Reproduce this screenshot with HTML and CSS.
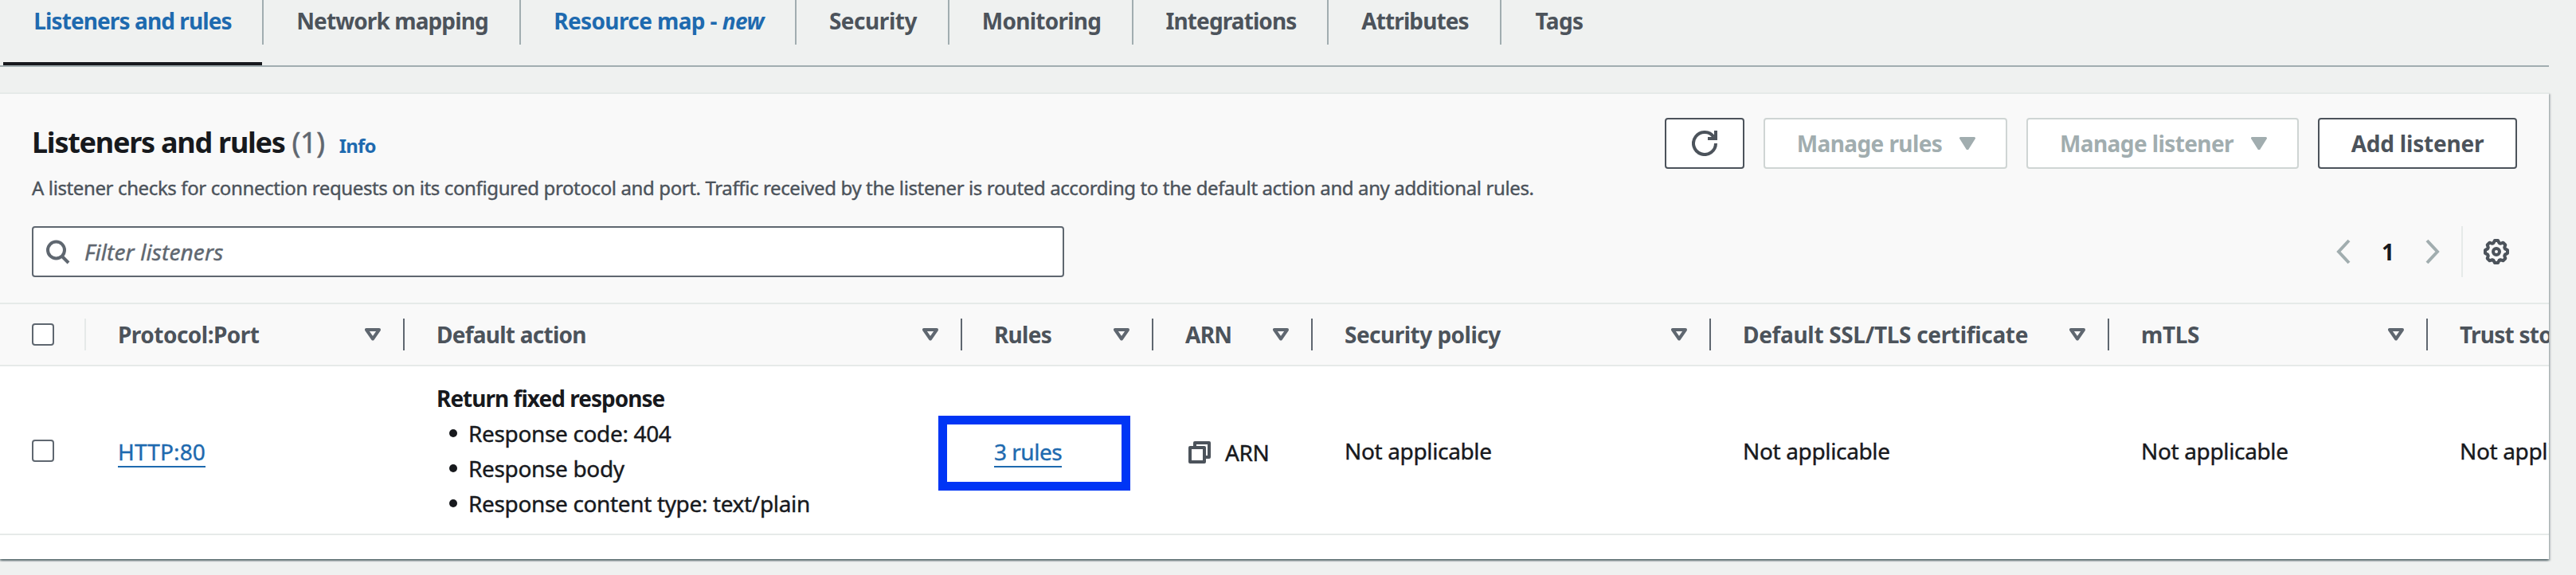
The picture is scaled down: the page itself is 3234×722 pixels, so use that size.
FILE: index.html
```
<!DOCTYPE html>
<html lang="en">
<head>
<meta charset="utf-8">
<title>Listeners and rules</title>
<link rel="stylesheet" href="styles.css">
</head>
<body>
<svg class="defs" width="0" height="0" aria-hidden="true">
  <symbol id="sort" viewBox="0 0 20 16"><path d="M2 2H18L10 13.5Z" fill="none" stroke="currentColor" stroke-width="4" stroke-linejoin="round"/></symbol>
  <symbol id="caret" viewBox="0 0 20 16"><path d="M1.5 1.5H18.5L10 15Z" fill="currentColor" stroke="currentColor" stroke-width="3" stroke-linejoin="round"/></symbol>
</svg>

<nav class="tabs">
  <a class="tab tab-active">Listeners and rules</a>
  <a class="tab">Network mapping</a>
  <a class="tab tab-new">Resource map -&nbsp;<em>new</em></a>
  <a class="tab tab-security">Security</a>
  <a class="tab tab-monitoring">Monitoring</a>
  <a class="tab">Integrations</a>
  <a class="tab">Attributes</a>
  <a class="tab tab-tags">Tags</a>
</nav>

<section class="panel">
  <header class="panel-header">
    <div class="title-row">
      <div class="title-block">
        <div class="title-line">
          <h2 class="title">Listeners and rules</h2>
          <span class="count">(1)</span>
          <a class="info">Info</a>
        </div>
        <p class="description">A listener checks for connection requests on its configured protocol and port. Traffic received by the listener is routed according to the default action and any additional rules.</p>
      </div>
      <div class="actions">
        <button class="btn btn-refresh" aria-label="Refresh">
          <svg width="32" height="32" viewBox="0 0 32 32" fill="none" stroke="currentColor" stroke-width="4"><path d="M30 16A14 14 0 1 1 27.5 8"/><path d="M30 0V10H20"/></svg>
        </button>
        <button class="btn btn-disabled btn-rules">Manage rules<svg class="caret" width="20" height="16"><use href="#caret"/></svg></button>
        <button class="btn btn-disabled btn-listener">Manage listener<svg class="caret" width="20" height="16"><use href="#caret"/></svg></button>
        <button class="btn btn-add">Add listener</button>
      </div>
    </div>
    <div class="tools">
      <div class="search">
        <svg width="32" height="32" viewBox="0 0 32 32" fill="none" stroke="currentColor" stroke-width="4"><circle cx="14.5" cy="14" r="10.5"/><path d="M21.5 21.5L30 30"/></svg>
        <span class="placeholder">Filter listeners</span>
      </div>
      <div class="pager">
        <svg class="chev" width="18" height="32" viewBox="0 0 18 32"><path d="M16 2L3 16L16 30"/></svg>
        <span class="page">1</span>
        <svg class="chev" width="18" height="32" viewBox="0 0 18 32"><path d="M2 2L15 16L2 30"/></svg>
        <span class="rule"></span>
        <svg class="gear" width="32" height="32" viewBox="-16 -16 32 32" fill="none" stroke="currentColor" stroke-width="4" stroke-linejoin="round"><path d="M14-2V2L10.9 3.6L10.2 5.2L11.3 8.5L8.5 11.3L5.2 10.2L3.6 10.9L2 14H-2L-3.6 10.9L-5.2 10.2L-8.5 11.3L-11.3 8.5L-10.2 5.2L-10.9 3.6L-14 2V-2L-10.9-3.6L-10.2-5.2L-11.3-8.5L-8.5-11.3L-5.2-10.2L-3.6-10.9L-2-14H2L3.6-10.9L5.2-10.2L8.5-11.3L11.3-8.5L10.2-5.2L10.9-3.6Z"/><circle r="4"/></svg>
      </div>
    </div>
  </header>

  <div class="table">
    <div class="row head">
      <div class="th th-check"><span class="checkbox"></span></div>
      <div class="th th-proto">Protocol:Port<svg class="sort" width="20" height="16"><use href="#sort"/></svg></div>
      <div class="th">Default action<svg class="sort" width="20" height="16"><use href="#sort"/></svg></div>
      <div class="th">Rules<svg class="sort" width="20" height="16"><use href="#sort"/></svg></div>
      <div class="th">ARN<svg class="sort" width="20" height="16"><use href="#sort"/></svg></div>
      <div class="th th-policy">Security policy<svg class="sort" width="20" height="16"><use href="#sort"/></svg></div>
      <div class="th th-cert">Default SSL/TLS certificate<svg class="sort" width="20" height="16"><use href="#sort"/></svg></div>
      <div class="th th-cert">mTLS<svg class="sort" width="20" height="16"><use href="#sort"/></svg></div>
      <div class="th">Trust store</div>
    </div>
    <div class="row body">
      <div class="td"><span class="checkbox"></span></div>
      <div class="td"><a class="link link-port">HTTP:80</a></div>
      <div class="td td-action">
        <strong class="action">Return fixed response</strong>
        <ul class="details">
          <li>Response code: 404</li>
          <li>Response body</li>
          <li>Response content type: text/plain</li>
        </ul>
      </div>
      <div class="td td-rules"><a class="link link-rules">3 rules</a><span class="highlight"></span></div>
      <div class="td td-arn">
        <svg class="copy" width="28" height="28" viewBox="0 0 28 28" fill="none" stroke="currentColor" stroke-width="4" stroke-linejoin="round"><path d="M2 8H20V26H2Z"/><path d="M8 8V2H26V20H20"/></svg>
        <span>ARN</span>
      </div>
      <div class="td">Not applicable</div>
      <div class="td">Not applicable</div>
      <div class="td">Not applicable</div>
      <div class="td">Not applicable</div>
    </div>
  </div>
</section>
</body>
</html>
```
FILE: styles.css
```
* { box-sizing: border-box; }

body {
  margin: 0;
  height: 722px;
  overflow: hidden;
  background: #eff1f0;
  color: #17191d;
  font: 400 28px/44px "Noto Sans", sans-serif;
  letter-spacing: -0.35px;
  white-space: nowrap;
}

.defs { display: none; }
svg { flex: none; display: block; }

/* Tabs */
.tabs {
  display: grid;
  grid-template-columns: 327px 323px 346px 192px 231px 245px 217px 145px;
  width: 3200px;
  height: 84px;
  padding-left: 4px;
  border-bottom: 2px solid #a1adb0;
}
.tab {
  display: flex;
  justify-content: center;
  height: 56px;
  padding: 4px 0 0 2px;
  border-right: 2px solid #a1adb0;
  color: #4c535b;
  font-weight: 700;
  letter-spacing: -0.9px;
}
.tab:last-child { border-right: 0; padding-left: 0; }
.tab-active { position: relative; padding-left: 0; color: #1e6aaf; }
.tab-active::after {
  content: "";
  position: absolute;
  left: 0;
  right: 0;
  top: 78px;
  height: 4px;
  background: #17191d;
}
.tab-new { color: #1e6aaf; letter-spacing: -0.6px; }
.tab-security { letter-spacing: -0.45px; }
.tab-monitoring { letter-spacing: -0.75px; }
.tab-tags { letter-spacing: -0.6px; }

/* Panel */
.panel {
  width: 3200px;
  height: 586px;
  margin-top: 32px;
  border-top: 2px solid #e6eae9;
  background: #fff;
  box-shadow: 0 2px 2px rgba(0, 28, 36, 0.4), 2px 2px 2px rgba(0, 28, 36, 0.2), -2px 2px 2px rgba(0, 28, 36, 0.2);
}
.panel-header {
  height: 262px;
  padding: 30px 40px 0;
  background: #f9f9f9;
}
.title-row {
  display: flex;
  justify-content: space-between;
  height: 136px;
}
.title-line {
  display: flex;
  align-items: baseline;
  height: 44px;
  margin-top: 9px;
}
.title {
  margin: 0;
  font-size: 36px;
  font-weight: 700;
  line-height: 44px;
  letter-spacing: -1.25px;
}
.count { margin-left: 9px; color: #5f6770; font-size: 36px; -webkit-text-stroke: 0.5px; }
.info {
  margin-left: 18px;
  color: #1e6aaf;
  font-size: 24px;
  font-weight: 700;
  letter-spacing: -0.8px;
}
.description {
  margin: 15px 0 0;
  color: #4c535b;
  font-size: 24px;
  line-height: 40px;
  letter-spacing: -0.38px;
  -webkit-text-stroke: 0.4px;
}
.actions { display: flex; gap: 24px; }
.btn {
  display: flex;
  align-items: center;
  justify-content: center;
  height: 64px;
  padding: 0;
  border: 2px solid #4c535b;
  border-radius: 4px;
  background: #fff;
  color: #4c535b;
  font: 700 28px/44px "Noto Sans", sans-serif;
  letter-spacing: -0.6px;
}
.btn-refresh { width: 100px; }
.btn-disabled { padding-left: 2px; border-color: #cfd5d4; color: #a1adaf; }
.btn-rules { width: 306px; }
.btn-listener { width: 342px; }
.btn-add { width: 250px; letter-spacing: -0.2px; }
.caret { margin-left: 22px; }

.tools {
  display: flex;
  justify-content: space-between;
  height: 64px;
}
.search {
  display: flex;
  align-items: center;
  width: 1296px;
  height: 64px;
  padding-left: 14px;
  border: 2px solid #5f6770;
  border-radius: 4px;
  background: #fff;
  color: #5f6770;
}
.placeholder {
  margin-left: 18px;
  font-style: italic;
  letter-spacing: 0.1px;
  -webkit-text-stroke: 0.4px;
}
.pager {
  display: flex;
  align-items: center;
  padding-right: 10px;
}
.chev { fill: none; stroke: #a1adaf; stroke-width: 4; }
.page { width: 16px; margin: 0 39px; font-weight: 700; }
.rule { width: 2px; height: 64px; margin: 0 26px 0 27px; background: #e6eae9; }
.gear { color: #4c535b; }

/* Table */
.table { overflow: hidden; }
.row {
  display: grid;
  grid-template-columns: 108px 400px 700px 240px 200px 500px 500px 400px 400px;
  width: 3448px;
}
.head {
  height: 80px;
  border-top: 2px solid #e6eae9;
  border-bottom: 2px solid #e6eae9;
  background: #f9f9f9;
}
.th {
  display: flex;
  align-items: center;
  justify-content: space-between;
  height: 40px;
  margin-top: 18px;
  padding: 0 28px 0 40px;
  border-right: 2px solid #5f6770;
  color: #4c535b;
  font-weight: 700;
  letter-spacing: -0.75px;
}
.th-check { border-color: #e6eae9; }
.th-proto, .th-policy { letter-spacing: -0.52px; }
.th-cert { letter-spacing: -0.33px; }
.sort { color: #5f6770; }
.body { height: 212px; border-bottom: 2px solid #e6eae9; -webkit-text-stroke: 0.4px; }
.td {
  display: flex;
  align-items: center;
  padding: 18px 0 16px 40px;
}
.checkbox {
  width: 28px;
  height: 28px;
  border: 2px solid #5f6770;
  border-radius: 4px;
  background: #fff;
}
.link {
  height: 42px;
  border-bottom: 2px solid #1e6aaf;
  color: #1e6aaf;
}
.link-port { letter-spacing: 0.15px; }
.link-rules { letter-spacing: -0.5px; }
.td-action { display: block; }
.action {
  display: block;
  font-weight: 700;
  letter-spacing: -0.98px;
  -webkit-text-stroke: 0;
}
.details { margin: 0; padding: 0 0 0 16px; list-style: none; }
.details li { display: flex; align-items: center; gap: 14px; }
.details li::before {
  content: "";
  width: 10px;
  height: 10px;
  border-radius: 50%;
  background: #17191d;
}
.td-rules { position: relative; }
.highlight {
  position: absolute;
  left: -30px;
  top: 62px;
  width: 241px;
  height: 94px;
  border: 11px solid #0035f5;
}
.td-arn { gap: 18px; padding-left: 44px; padding-top: 20px; padding-bottom: 14px; }
.copy { color: #4c535b; }
```
